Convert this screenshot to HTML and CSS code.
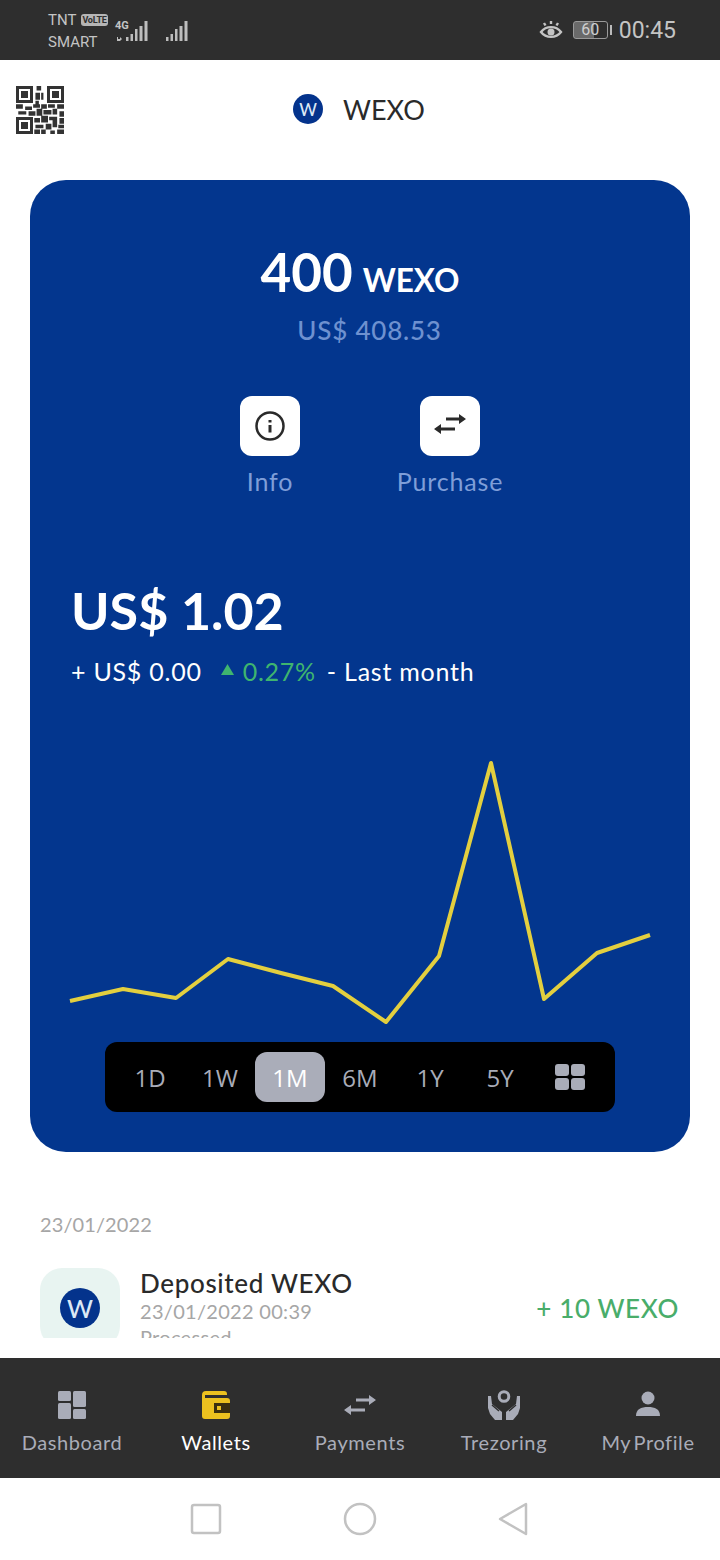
FILE: index.html
```html
<!DOCTYPE html>
<html lang="en">
<head>
<meta charset="utf-8">
<title>WEXO Wallet</title>
<link rel="stylesheet" href="styles.css">
</head>
<body>
<div class="phone">
  <div class="status">
    <div class="status-left">
      <div class="carrier">
        <div class="carrier-top"><span>TNT</span><span class="volte">VoLTE</span></div>
        <div>SMART</div>
      </div>
      <div class="net"><span class="net-g">4G</span>
        <svg class="sig-a" width="33" height="20" viewBox="0 0 33 20"><path fill="#bdbdbd" d="M2 16h1v2h2v-2l2 2-2 2H2zM11 16h2.500v4H11zM15.500 13h2.500v7h-2.500zM20 8h2.500v12H20zM24.500 5h3v15h-3zM29.500 0h3v20h-3z"/></svg>
      </div>
      <svg class="sig-b" width="23" height="20" viewBox="0 0 23 20"><path fill="#bdbdbd" d="M0 16h2.500v4H0zM4.500 13h2.500v7H4.500zM9 8h2.500v12H9zM13.500 5h3v15h-3zM18.500 0h3v20h-3z"/></svg>
    </div>
    <div class="status-right">
      <svg width="24" height="20" viewBox="0 0 24 20" fill="none" stroke="#c4c4c4" stroke-width="2.400"><path d="M2 12c5-6.500 15-6.500 20 0c-5 6.500-15 6.500-20 0z"/><circle cx="12" cy="12" r="3.500" fill="#c4c4c4" stroke="none"/><path d="M12 1v3M5 3l1.500 2.500M19 3l-1.500 2.500"/></svg>
      <div class="batt"><span class="batt-body">60</span><span class="batt-tip"></span></div>
      <span class="clock">00:45</span>
    </div>
  </div>

  <header class="top">
    <svg class="qr" width="48" height="48" viewBox="0 0 48 48"><path fill="#333" fill-rule="evenodd" d="M0 0h17v17H0zM3 3v11h11V3zM5 5h7v7H5zM31 0h17v17H31zM34 3v11h11V3zM36 5h7v7h-7zM0 31h17v17H0zM3 34v11h11V34zM5 36h7v7H5z"/><g transform="scale(2.286)" fill="#333"><path d="M9 0h2v2H9zM8.500 3h2v3h-2zM11 3h1v3h-1zM8.500 6.500h1.500v2H8.500zM0 8h3v2H0zM4 9h3v1.500H4zM7.500 8h3v1.500h-3zM11 8h2.500v2H11zM14 8h3v1.500h-3zM18 8h3v2h-3zM1 11h3.500v1.500H1zM5.500 11h3v2h-3zM9 10h2.500v3H9zM12 10.500h3.500v2H12zM16 10h2v2.500h-2zM19 11h2v2.500h-2zM8 14h2.500v2H8zM11 13h3v3h-3zM14.500 13.500h3.500v1.500h-3.500zM19 14h2v2.500h-2zM8.500 17h3.500v1.500H8.500zM13 16.500h2.500v2.500H13zM16 15h2v3h-2zM18.500 17h2.500v1.500h-2.500zM8 19h2.500v2H8zM11 19h2v2h-2zM15 19.500h2v1.500h-2zM18 19h3v2h-3z"/></g></svg>
    <div class="brand"><span class="coin coin-sm">W</span><span class="brand-name">WEXO</span></div>
    <span></span>
  </header>

  <main class="content">
    <section class="card">
      <div class="balance"><span class="bal-num">400</span><span class="bal-unit">WEXO</span></div>
      <div class="bal-usd">US$ 408.53</div>
      <div class="actions">
        <div class="action">
          <span class="action-btn"><svg width="32" height="32" viewBox="0 0 32 32" fill="none" stroke="#2a2a2a" stroke-width="2.500"><circle cx="16" cy="16" r="13.500"/><path d="M16 10v2.500M16 15v7.500" stroke-width="3"/></svg></span>
          <span class="action-label">Info</span>
        </div>
        <div class="action">
          <span class="action-btn"><svg class="swap" width="32" height="20" viewBox="0 0 32 20" fill="none" stroke="#2a2a2a" stroke-width="3"><path d="M12 5h15M5 15h16"/><path d="M25 0l7 5-7 5zM7 10l-7 5 7 5z" fill="#2a2a2a" stroke="none"/></svg></span>
          <span class="action-label">Purchase</span>
        </div>
      </div>
      <div class="price">US$ 1.02</div>
      <div class="change">
        <span>+ US$ 0.00</span>
        <span class="up"><svg class="tri" width="13" height="11" viewBox="0 0 13 11"><path fill="#3fb56f" d="M6.500 0l6.500 11H0z"/></svg>0.27%</span>
        <span>- Last month</span>
      </div>
      <svg class="chart" width="660" height="301" viewBox="30 740 660 301" fill="none"><polyline stroke="#e3cf3f" stroke-width="4" stroke-linejoin="round" points="70,1000 123,988 176,997 228,958 281,972 333,985 386,1021 439,955 491,762 544,998 597,952 650,934"/></svg>
      <div class="ranges">
        <span class="range">1D</span><span class="range">1W</span><span class="range is-active">1M</span><span class="range">6M</span><span class="range">1Y</span><span class="range">5Y</span>
        <span class="range"><svg width="30" height="26" viewBox="0 0 30 26" fill="#a9acb8"><rect width="14" height="12" rx="3"/><rect x="16" width="14" height="12" rx="3"/><rect y="14" width="14" height="12" rx="3"/><rect x="16" y="14" width="14" height="12" rx="3"/></svg></span>
      </div>
    </section>

    <div class="tx-date">23/01/2022</div>
    <div class="tx">
      <div class="tx-icon"><span class="coin coin-lg">W</span></div>
      <div class="tx-body">
        <div class="tx-title">Deposited WEXO</div>
        <div class="tx-sub">23/01/2022 00:39</div>
        <div class="tx-sub">Processed</div>
      </div>
      <div class="tx-amount">+ 10 WEXO</div>
    </div>
  </main>

  <nav class="nav">
    <div class="nav-item">
      <svg width="28" height="28" viewBox="0 0 28 28" fill="#a9acb8"><rect width="13" height="10" y="0" rx="1.500"/><rect y="12" width="13" height="16" rx="1.500"/><rect x="15" width="13" height="16" rx="1.500"/><rect x="15" y="18" width="13" height="10" rx="1.500"/></svg>
      <span>Dashboard</span>
    </div>
    <div class="nav-item is-active">
      <svg width="28" height="28" viewBox="0 0 28 28"><path fill="#ecc11f" fill-rule="evenodd" d="M4 0h18a3 3 0 0 1 3 3v1H3v3h22a3 3 0 0 1 3 3v15a3 3 0 0 1-3 3H3a3 3 0 0 1-3-3V4a4 4 0 0 1 4-4z"/><rect x="12" y="12" width="16" height="10" fill="#3a2f10"/><rect x="15" y="15" width="4" height="4" fill="#ecc11f"/></svg>
      <span>Wallets</span>
    </div>
    <div class="nav-item">
      <svg width="32" height="22" viewBox="0 0 32 20" fill="none" stroke="#a9acb8" stroke-width="3"><path d="M12 5h15M5 15h16"/><path d="M25 0l7 5-7 5zM7 10l-7 5 7 5z" fill="#a9acb8" stroke="none"/></svg>
      <span>Payments</span>
    </div>
    <div class="nav-item">
      <svg width="32" height="30" viewBox="0 0 32 30" fill="#a9acb8"><circle cx="16" cy="6.500" r="4.800" fill="none" stroke="#a9acb8" stroke-width="3"/><path d="M0 6h3l1 8 5 4 5 4v8H7L2 24 0 18zM32 6h-3l-1 8-5 4-5 4v8h7l5-6 2-6z"/><path d="M4 15l7 6M28 15l-7 6" fill="none" stroke="#2e2e2e" stroke-width="1.500"/></svg>
      <span>Trezoring</span>
    </div>
    <div class="nav-item">
      <svg width="26" height="28" viewBox="0 0 26 28" fill="#a9acb8"><circle cx="13" cy="7" r="6.500"/><path d="M1 25c0-7 5-9 12-9s12 2 12 9z"/></svg>
      <span>My Profile</span>
    </div>
  </nav>

  <div class="android">
    <svg width="32" height="32" viewBox="0 0 32 32" fill="none" stroke="#c2c2c2" stroke-width="2.500"><rect x="2" y="2" width="28" height="28" rx="2"/></svg>
    <svg width="34" height="34" viewBox="0 0 34 34" fill="none" stroke="#c2c2c2" stroke-width="2.500"><circle cx="17" cy="17" r="15"/></svg>
    <svg width="30" height="34" viewBox="0 0 30 34" fill="none" stroke="#c2c2c2" stroke-width="2.500" stroke-linejoin="round"><path d="M28 2v30L2 17z"/></svg>
  </div>
</div>
</body>
</html>
```
FILE: styles.css
```css
* { box-sizing: border-box; }
html, body { margin: 0; padding: 0; background: #fff; }
body { font-family: "Lato", "Liberation Sans", sans-serif; color: #2a2a2a; }
.phone { width: 720px; height: 1560px; display: flex; flex-direction: column; overflow: hidden; }

.status { height: 60px; background: #2e2e2e; display: flex; justify-content: space-between; align-items: center; padding: 0 44px 0 48px; color: #c4c4c4; flex: none; }
.status-left { display: flex; align-items: center; }
.carrier { font-family: "Roboto", sans-serif; font-size: 15px; line-height: 22px; width: 67px; margin-top: 1px; }
.carrier-top { display: flex; align-items: center; gap: 5px; white-space: nowrap; }
.volte { font-size: 9px; line-height: 12px; padding: 0 1px; background: #b5b5b5; color: #2e2e2e; border-radius: 3px; font-weight: 700; letter-spacing: -.2px; }
.net { position: relative; width: 33px; height: 20px; margin-top: 1px; }
.net-g { position: absolute; left: 0; top: -1px; font-family: "Roboto", sans-serif; font-size: 11px; font-weight: 700; line-height: 12px; }
.sig-a { position: absolute; right: 0; bottom: 0; }
.sig-b { margin-left: 18px; margin-top: 1px; }
.status-right { display: flex; align-items: center; }
.batt { display: flex; align-items: center; margin-left: 10px; }
.batt-body { width: 35px; height: 18px; border: 1px solid #9a9a9a; border-radius: 3px; background: linear-gradient(90deg, #6a6a6a 60%, transparent 60%); font-family: "Roboto", sans-serif; font-size: 16px; line-height: 16px; text-align: center; color: #cfcfcf; }
.batt-tip { width: 2px; height: 10px; background: #bbb; margin-left: 2px; }
.clock { font-family: "Roboto", sans-serif; font-size: 23px; margin-left: 7px; color: #c4c4c4; }

.top { height: 100px; flex: none; display: grid; grid-template-columns: 1fr auto 1fr; align-items: center; padding: 0 16px 2px; }
.qr { display: block; margin-top: 2px; }
.brand { display: flex; align-items: center; gap: 20px; margin-left: -2px; }
.brand-name { font-size: 27px; color: #2a2a2a; line-height: 1; }
.coin { display: flex; align-items: center; justify-content: center; border-radius: 50%; background: #04338c; color: #dce8f5; font-weight: 500; }
.coin-sm { width: 30px; height: 30px; font-size: 17px; }
.coin-lg { width: 40px; height: 40px; font-size: 25px; }

.content { height: 1178px; flex: none; overflow: hidden; }
.card { margin: 20px 30px 0; height: 972px; background: #03368e; border-radius: 36px; color: #fff; padding-top: 60px; display: flex; flex-direction: column; }
.balance { text-align: center; line-height: 64px; height: 64px; }
.bal-num { font-size: 53px; font-weight: 700; }
.bal-unit { font-size: 31.500px; font-weight: 700; margin-left: 10px; }
.bal-usd { text-align: center; font-size: 26px; line-height: 32px; margin-top: 10px; padding-left: 19px; color: #6e91d0; font-weight: 500; letter-spacing: .8px; }
.actions { display: flex; justify-content: center; margin-top: 50px; }
.action { width: 180px; display: flex; flex-direction: column; align-items: center; gap: 9px; }
.action-btn { width: 60px; height: 60px; border-radius: 12px; background: #fff; display: flex; align-items: center; justify-content: center; }
.swap { margin-top: -4px; }
.action-label { font-size: 25px; line-height: 32px; color: #7f9ed8; letter-spacing: .85px; }
.price { font-size: 52px; font-weight: 700; line-height: 60px; margin: 83px 0 0 41px; }
.change { display: flex; align-items: center; margin: 15px 0 0 41px; font-size: 25px; line-height: 32px; letter-spacing: .75px; }
.up { color: #3fb56f; display: flex; align-items: center; gap: 9px; margin: 0 11px 0 19px; }
.tri { margin-top: -4px; }
.chart { display: block; margin-top: 54px; flex: none; }
.ranges { margin: 0 auto; width: 510px; height: 70px; background: #000; border-radius: 12px; padding: 10px; display: flex; }
.range { width: 70px; height: 50px; flex: none; display: flex; align-items: center; justify-content: center; border-radius: 12px; font-family: "Open Sans", sans-serif; font-size: 24px; color: #a9acb8; }
.range.is-active { background: #aaadb9; color: #fff; }

.tx-date { margin: 59px 0 0 40px; font-size: 20px; line-height: 26px; color: #a6a6a6; letter-spacing: .1px; }
.tx { display: flex; align-items: flex-start; margin: 31px 41px 0 40px; }
.tx-icon { width: 80px; height: 80px; border-radius: 22px; background: #e8f4f1; display: flex; align-items: center; justify-content: center; flex: none; }
.tx-body { margin-left: 20px; flex: 1; }
.tx-title { font-size: 26px; line-height: 30px; color: #2a2a2a; font-weight: 500; letter-spacing: .65px; }
.tx-sub { font-size: 20px; line-height: 26px; color: #a6a6a6; letter-spacing: .3px; }
.tx-amount { font-size: 26px; line-height: 30px; margin-top: 25px; color: #49ad6a; font-weight: 500; letter-spacing: .6px; }

.nav { height: 120px; margin-top: 20px; flex: none; background: #2e2e2e; display: flex; }
.nav-item { width: 144px; display: flex; flex-direction: column; align-items: center; padding-top: 32px; color: #a9acb8; font-size: 20px; letter-spacing: .6px; word-spacing: -3px; }
.nav-item svg { height: 30px; flex: none; }
.nav-item span { line-height: 28px; margin-top: 8px; }
.nav-item.is-active { color: #fff; }

.android { height: 82px; flex: none; background: #fff; display: flex; align-items: center; justify-content: center; gap: 121px; padding-right: 2px; }
```
